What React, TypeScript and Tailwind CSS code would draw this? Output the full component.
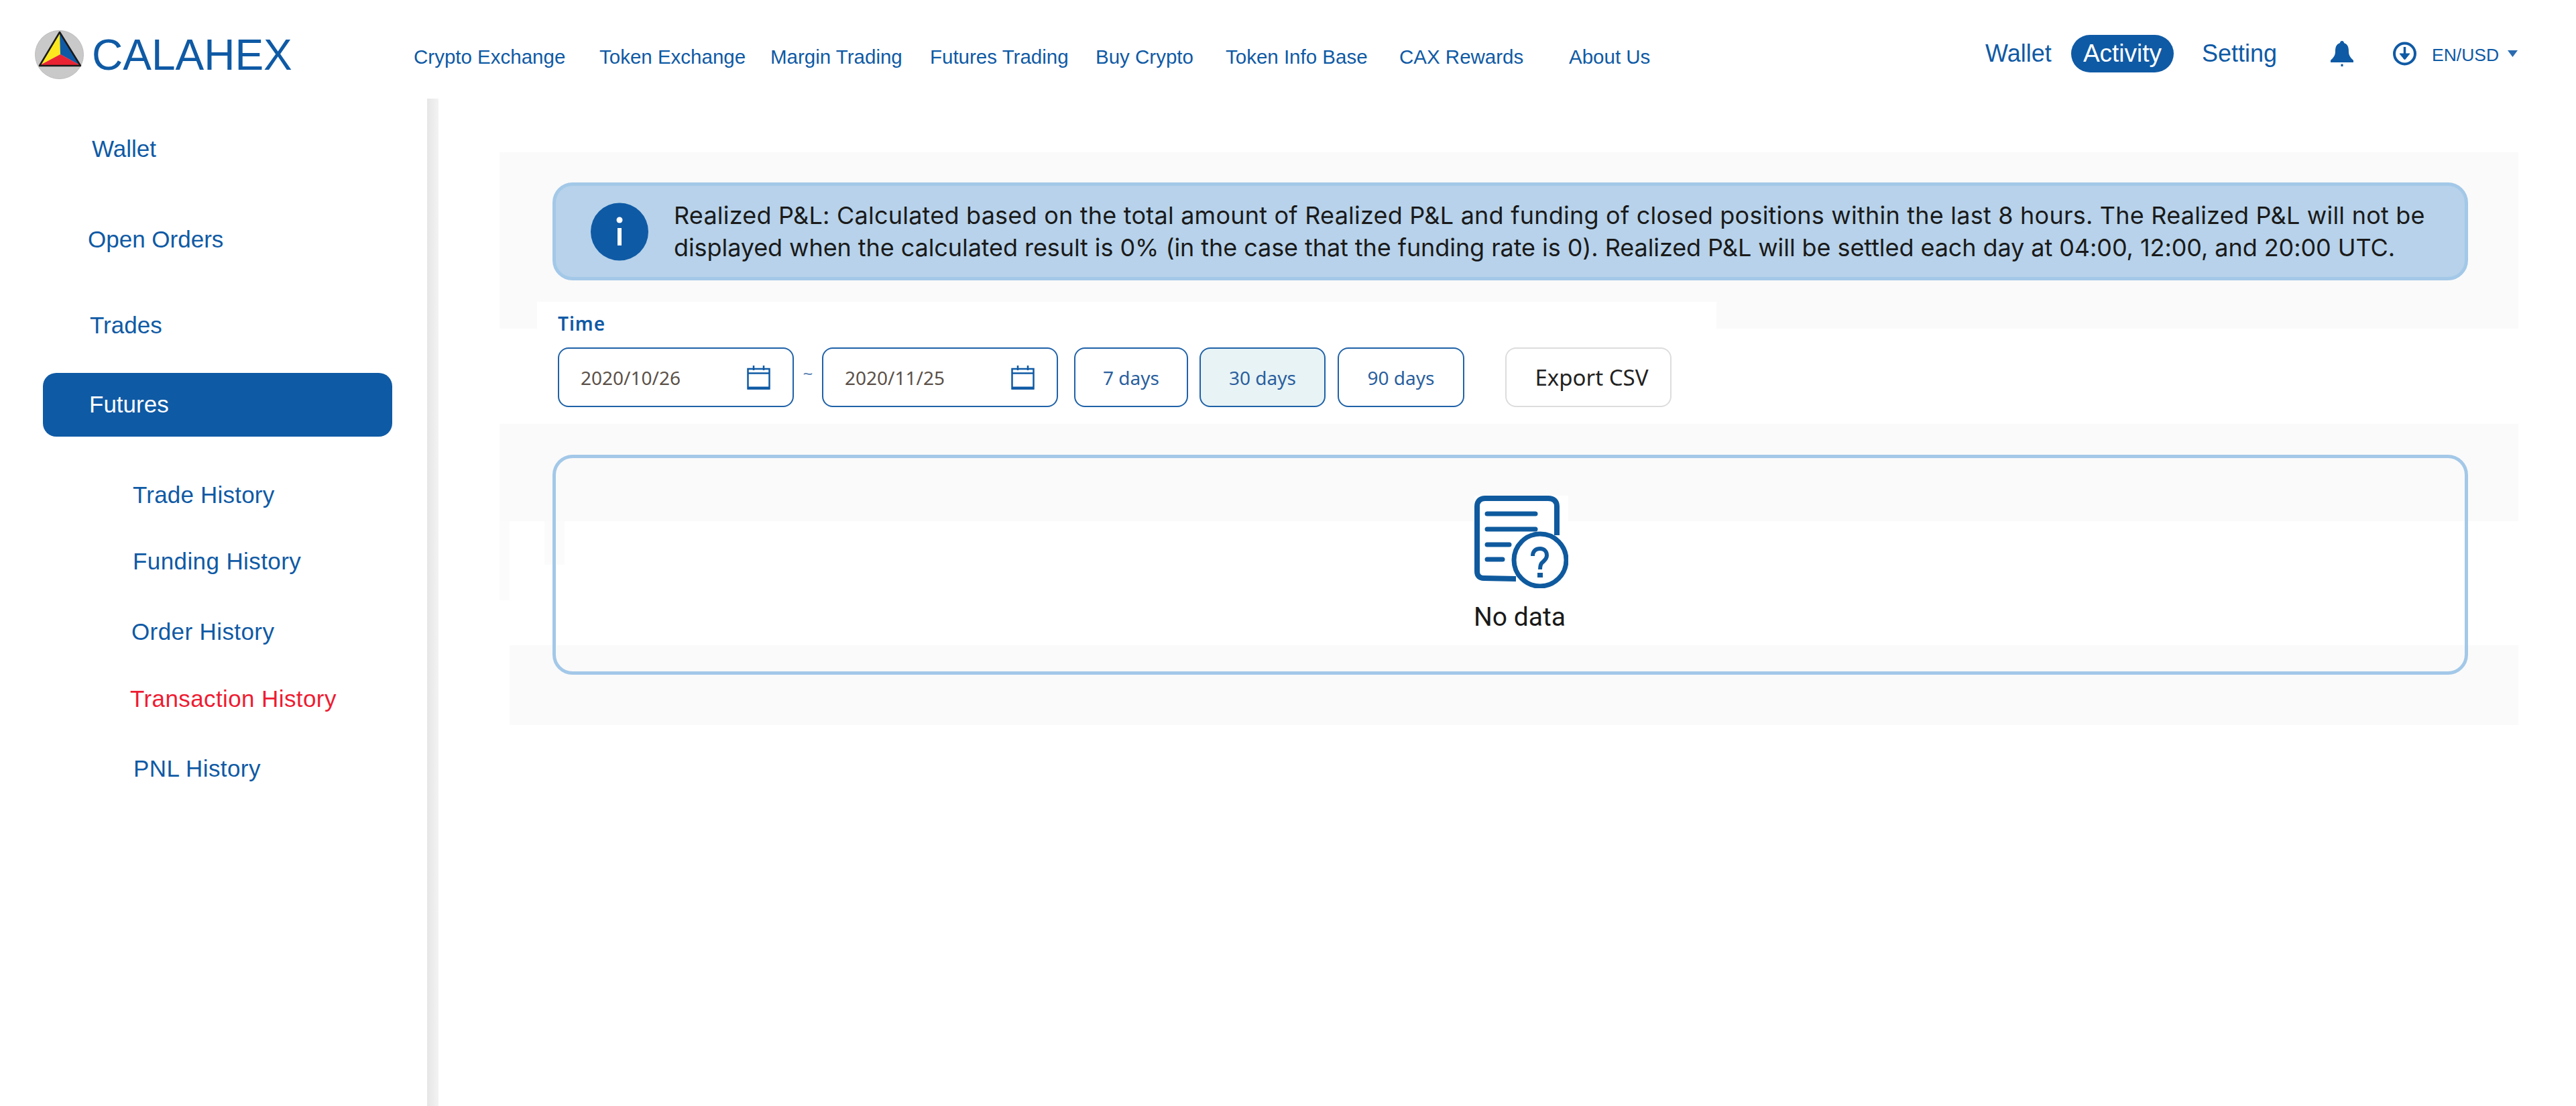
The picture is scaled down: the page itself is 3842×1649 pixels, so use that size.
const navItems = [
  { label: "Crypto Exchange", width: "w-[277px]" },
  { label: "Token Exchange", width: "w-[255px]" },
  { label: "Margin Trading", width: "w-[238px]" },
  { label: "Futures Trading", width: "w-[247px]" },
  { label: "Buy Crypto", width: "w-[194px]" },
  { label: "Token Info Base", width: "w-[259px]" },
  { label: "CAX Rewards", width: "w-[253px]" },
  { label: "About Us", width: "w-[621px]" },
];

function Logo() {
  return (
    <svg width="73" height="73" viewBox="0 0 73 73" className="shrink-0">
      <circle cx="36.5" cy="36.5" r="36" fill="#c9c9c9" stroke="#bdbdbd" />
      <path d="M37 3 L38 36 L8 52 Z" fill="#fde81f" />
      <path d="M37 3 L38 36 L67 52 Z" fill="#0f5aa5" />
      <path d="M8 52 L38 36 L67 52 Z" fill="#ea2333" />
      <path d="M37 3 L68 53 L7 53 Z" fill="none" stroke="#1a1a1a" strokeWidth="2.5" strokeLinejoin="round" />
    </svg>
  );
}

function CalendarIcon() {
  return (
    <svg width="35" height="36" viewBox="0 0 35 36" className="shrink-0 text-[#0f5aa5]" fill="none" stroke="currentColor">
      <rect x="1.5" y="5" width="32" height="29.5" strokeWidth="2.5" />
      <path d="M1 11.5 H34" strokeWidth="2.5" />
      <path d="M1 33.5 H34" strokeWidth="4" />
      <path d="M10 0 V7 M25 0 V7" strokeWidth="2.5" />
    </svg>
  );
}

function NoDataIcon() {
  return (
    <svg width="140" height="138" viewBox="0 0 140 138" className="bg-white" fill="none" stroke="#0f5a9e">
      <path d="M62 124 L14 123 C8 123 4 120 4 113 V16 C4 8 9 4 16 4 H110 C118 4 123 8 123 16 V59" strokeWidth="8" />
      <path d="M19 27 H91 M19 50 H91 M19 73 H52 M19 95 H42" strokeWidth="7" strokeLinecap="round" />
      <circle cx="98" cy="96" r="39" strokeWidth="7" />
      <path d="M87 90 C87 82 92 79 98 79 C104 79 108 83 108 89 C108 94 105 96 102 99 C99 101 98 104 98 110" strokeWidth="6" />
      <rect x="94" y="115" width="8" height="7" fill="#0f5a9e" stroke="none" />
    </svg>
  );
}

function SideLink({ label, className }: { label: string; className: string }) {
  return <div className={`h-[40px] leading-[40px] text-[35px] ${className}`}>{label}</div>;
}

function DateInput({ value }: { value: string }) {
  return (
    <div className="flex h-[89px] w-[352px] items-center justify-between rounded-[16px] border-2 border-[#1f62a8] pl-[32px] pr-[33px]">
      <span className="text-[28px] text-[#5b5149]">{value}</span>
      <CalendarIcon />
    </div>
  );
}

function RangeButton({ label, className }: { label: string; className: string }) {
  return (
    <button className={`h-[89px] rounded-[16px] border-2 border-[#1f62a8] text-[28px] text-[#2a5f9e] ${className}`}>
      {label}
    </button>
  );
}

export default function App() {
  return (
    <div className="h-[1649px] w-[3842px] overflow-hidden bg-white font-['Liberation_Sans',sans-serif] text-[#0f5aa5]">
      <header className="flex h-[147px] items-center">
        <div className="ml-[52px] mt-[16px] flex w-[565px] items-center">
          <Logo />
          <span className="ml-[12px] text-[64px] leading-none">CALAHEX</span>
        </div>
        <nav className="mt-[23px] flex items-center text-[29.5px]">
          {navItems.map((item) => (
            <a key={item.label} className={`shrink-0 ${item.width}`}>
              {item.label}
            </a>
          ))}
        </nav>
        <div className="mt-[13px] flex items-center text-[36px]">
          <a className="w-[128px]">Wallet</a>
          <a className="flex h-[56px] w-[153px] items-center justify-center rounded-full bg-[#0f5aa5] text-[37px] text-white">
            Activity
          </a>
          <a className="ml-[42px] w-[192px]">Setting</a>
          <svg width="34" height="38" viewBox="0 0 34 38" fill="#0f5aa5">
            <path d="M17 0 C19 0 20 1.500 20 3 C26 5 27 10 27 16 C27 22 30 25 34 29 V32 H0 V29 C4 25 7 22 7 16 C7 10 8 5 14 3 C14 1.500 15 0 17 0 Z" />
            <rect x="15.500" y="34.500" width="3" height="3.500" />
          </svg>
          <svg width="35" height="36" viewBox="0 0 35 36" fill="none" stroke="#0f5aa5" className="ml-[59px]">
            <circle cx="17.500" cy="18" r="15.500" strokeWidth="4" />
            <path d="M17.500 8 V26" strokeWidth="3.500" />
            <path d="M10 18 L17.500 27 L25 18 Z" fill="#0f5aa5" strokeWidth="1" />
          </svg>
          <span className="ml-[23px] mt-[5px] w-[113px] text-[26.5px]">EN/USD</span>
          <svg width="15" height="10" viewBox="0 0 15 10" fill="#2a6cb0">
            <path d="M0 0 H15 L7.500 10 Z" />
          </svg>
        </div>
      </header>

      <div className="flex h-[1502px]">
        <aside className="h-full w-[637px] shrink-0">
          <SideLink label="Wallet" className="ml-[137px] mt-[55px]" />
          <SideLink label="Open Orders" className="ml-[131px] mt-[95px]" />
          <SideLink label="Trades" className="ml-[134px] mt-[88px]" />
          <div className="ml-[64px] mt-[51px] flex h-[95px] w-[521px] items-center rounded-[20px] bg-[#0f5aa5] pl-[69px] text-[35px] text-white">
            Futures
          </div>
          <SideLink label="Trade History" className="ml-[198px] mt-[67px] tracking-[0.2px]" />
          <SideLink label="Funding History" className="ml-[198px] mt-[59px] tracking-[0.4px]" />
          <SideLink label="Order History" className="ml-[196px] mt-[65px] tracking-[0.4px]" />
          <SideLink label="Transaction History" className="ml-[194px] mt-[60px] tracking-[0.4px] text-[#ee1c32]" />
          <SideLink label="PNL History" className="ml-[199px] mt-[64px] tracking-[0.4px]" />
        </aside>
        <div className="h-full w-[17px] shrink-0 bg-gradient-to-r from-[#e6e6e6] to-[#f3f3f3]" />

        <main className="min-w-0 flex-1">
          <section className="ml-[91px] mt-[80px] h-[263px] w-[3011px] bg-[#fafafa] pl-[79px] pt-[45px]">
            <div className="flex h-[146px] w-[2857px] items-center rounded-[30px] border-[5px] border-[#a3c8e8] bg-[#b7d2ea] pl-[52px]">
              <svg width="86" height="87" viewBox="0 0 86 87" className="shrink-0">
                <circle cx="43" cy="43.500" r="43" fill="#0f5aa5" />
                <circle cx="43" cy="26" r="4.500" fill="#fff" />
                <rect x="40" y="38" width="6" height="26" fill="#fff" />
              </svg>
              <p className="ml-[38px] font-['Inter',sans-serif] text-[36px] leading-[48px] text-[#1a1a1a]">
                <span className="block whitespace-nowrap tracking-[0.22px]">
                  Realized P&amp;L: Calculated based on the total amount of Realized P&amp;L and funding of closed positions within the last 8 hours. The Realized P&amp;L will not be
                </span>
                <span className="block whitespace-nowrap tracking-[-0.08px]">
                  displayed when the calculated result is 0% (in the case that the funding rate is 0). Realized P&amp;L will be settled each day at 04:00, 12:00, and 20:00 UTC.
                </span>
              </p>
            </div>
          </section>

          <section className="ml-[147px] -mt-[40px] h-[182px] w-[1759px] bg-white pl-[31px] pt-[13px] font-['Noto_Sans',sans-serif]">
            <div className="h-[38px] text-[28px] font-semibold leading-[38px] tracking-[1px]">Time</div>
            <div className="mt-[17px] flex items-center">
              <DateInput value="2020/10/26" />
              <span className="mb-[12px] w-[42px] text-center text-[26px] text-[#5f86b4]">~</span>
              <DateInput value="2020/11/25" />
              <RangeButton label="7 days" className="ml-[24px] w-[170px]" />
              <RangeButton label="30 days" className="ml-[17px] w-[188px] bg-[#e8f3f5]" />
              <RangeButton label="90 days" className="ml-[18px] w-[189px]" />
              <button className="ml-[61px] h-[89px] w-[248px] rounded-[16px] border-2 border-[#dddddd] pl-[10px] text-[33px] text-[#222222]">
                Export CSV
              </button>
            </div>
          </section>

          <section className="relative ml-[91px] h-[449px] w-[3011px] pl-[79px] pt-[46px]">
            <div className="absolute left-0 top-0 h-[145px] w-full bg-[#fafafa]" />
            <div className="absolute left-0 top-[145px] h-[118px] w-[15px] bg-[#fbfbfb]" />
            <div className="absolute left-[67px] top-[145px] h-[65px] w-[30px] bg-[#fbfbfb]" />
            <div className="absolute left-[15px] top-[330px] h-[119px] w-[2996px] bg-[#fafafa]" />
            <div className="relative flex h-[328px] w-[2857px] flex-col items-center rounded-[30px] border-[5px] border-[#a3c8e8] pl-[32px] pt-[56px]">
              <NoDataIcon />
              <span className="ml-[-4px] mt-[20px] font-['Roboto',sans-serif] text-[39px] leading-[46px] text-[#1a1a1a]">No data</span>
            </div>
          </section>
        </main>
      </div>
    </div>
  );
}
